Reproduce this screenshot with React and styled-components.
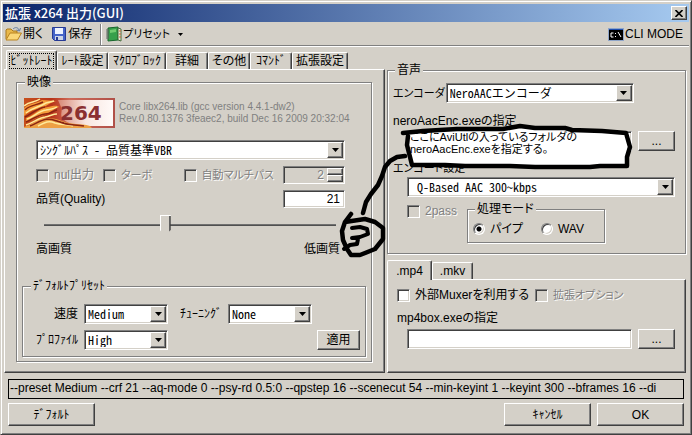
import React, { useState } from 'react'
import styled, { createGlobalStyle, css } from 'styled-components'

const face = '#d4d0c8'
const dark = '#404040'
const shade = '#808080'

const GlobalStyle = createGlobalStyle`
  * {
    box-sizing: border-box;
  }
  body {
    margin: 0;
    background: ${face};
  }
  body, button, input, select {
    font-family: "Liberation Sans", "Noto Sans CJK JP", sans-serif;
    font-size: 12px;
    line-height: 14px;
    font-feature-settings: "palt";
    color: #000;
  }
`

const raised = css`
  border: 1px solid;
  border-color: #fff ${dark} ${dark} #fff;
  box-shadow: inset -1px -1px 0 ${shade};
`

const sunken = css`
  border: 1px solid;
  border-color: ${shade} #fff #fff ${shade};
  box-shadow: inset 1px 1px 0 ${dark}, inset -1px -1px 0 ${face};
`

const Window = styled.main`
  display: flex;
  flex-direction: column;
  min-height: 100vh;
  padding: 3px 2px;
  background: ${face};
  border: 1px solid;
  border-color: ${face} ${dark} ${dark} ${face};
  box-shadow: inset 1px 1px 0 #fff, inset -1px -1px 0 ${shade};
  overflow: hidden;
`

const TitleBar = styled.header`
  display: flex;
  align-items: center;
  justify-content: space-between;
  height: 18px;
  padding: 0 2px;
  background: linear-gradient(to right, #0a246a, #a6caf0);
`

const Title = styled.h1`
  margin: 0;
  font-family: "Noto Sans CJK JP", sans-serif;
  font-size: 13px;
  line-height: 18px;
  font-weight: 500;
  color: #fff;
`

const CloseButton = styled.button`
  display: flex;
  align-items: center;
  justify-content: center;
  width: 16px;
  height: 14px;
  padding: 0;
  background: ${face};
  ${raised}
`

const Toolbar = styled.div`
  display: flex;
  align-items: center;
  height: 25px;
  padding: 0 6px 0 2px;
  border-bottom: 1px solid #fff;
  box-shadow: inset 0 -1px 0 ${shade};
`

const ToolButton = styled.button`
  display: flex;
  align-items: center;
  gap: 1px;
  padding: 0;
  margin-right: ${p => p.$gap || 0}px;
  border: none;
  background: none;
  white-space: nowrap;
  ${p => p.$small && 'font-size: 11px;'}
`

const Divider = styled.span`
  width: 2px;
  height: 21px;
  margin-right: 3px;
  background: ${shade};
  border-right: 1px solid #fff;
`

const Spring = styled.span`
  flex: 1;
`

const Body = styled.div`
  display: grid;
  grid-template-columns: minmax(0, 381fr) minmax(0, 299fr);
  gap: 2px;
  padding: 4px 3px 0 1px;
`

const TabList = styled.div`
  display: flex;
  align-items: flex-end;
  height: ${p => p.$height}px;
  padding-left: ${p => p.$inset || 0}px;
`

const Tab = styled.button`
  position: relative;
  width: ${p => p.$width}px;
  height: ${p => (p.$active ? 20 : 17)}px;
  margin-bottom: ${p => (p.$active ? -1 : 0)}px;
  padding: 0;
  background: ${face};
  border: 1px solid;
  border-color: #fff ${dark} transparent #fff;
  border-bottom: none;
  border-radius: 2px 2px 0 0;
  box-shadow: inset -1px 0 0 ${shade};
  white-space: nowrap;
`

const TabFocus = styled.span`
  display: block;
  margin: 0 2px;
  border: 1px dotted #000;
`

const TabPage = styled.section`
  padding: ${p => p.$pad};
  border: 1px solid;
  border-color: #fff ${dark} ${dark} #fff;
  box-shadow: inset -1px -1px 0 ${shade};
`

const Column = styled.div`
  display: flex;
  flex-direction: column;
  min-width: 0;
`

const Group = styled.fieldset`
  min-width: 0;
  margin: ${p => p.$margin || 0};
  padding: ${p => p.$pad};
  border: 1px solid ${shade};
  box-shadow: inset 1px 1px 0 #fff, 1px 1px 0 #fff;
`

const Legend = styled.legend`
  height: 14px;
  margin-left: ${p => p.$left || 0}px;
  padding: 0 2px;
  background: ${face};
  white-space: nowrap;
`

const Stack = styled.div`
  display: flex;
  flex-direction: column;
  gap: 6px;
  padding: 0 21px 0 14px;
`

const Row = styled.div`
  display: flex;
  align-items: ${p => (p.$top ? 'flex-start' : 'center')};
  justify-content: ${p => (p.$spread ? 'space-between' : 'flex-start')};
  gap: ${p => p.$gap || 0}px;
  margin: ${p => p.$margin || 0};
  height: ${p => p.$height || 20}px;
`

const About = styled.div`
  display: flex;
  align-items: center;
  gap: 4px;
  height: 30px;
  font-size: 10px;
  line-height: 12px;
  color: ${shade};
  white-space: nowrap;
`

const Label = styled.label`
  white-space: nowrap;
  ${p => p.$small && 'font-size: 11px;'}
  ${p => p.$block && 'display: block;'}
  ${p => p.$margin && `margin: ${p.$margin};`}
`

const SelectBox = styled.span`
  display: grid;
  align-items: center;
  min-width: 0;
  height: 20px;
  ${p => (p.$width ? `width: ${p.$width}px;` : 'flex: 1;')}
  background: #fff;
  ${sunken}
`

const NativeSelect = styled.select`
  grid-area: 1 / 1;
  width: 100%;
  height: 16px;
  padding: 0 18px 0 ${p => p.$indent || 3}px;
  border: none;
  outline: none;
  appearance: none;
  background: transparent;
  font-family: "Noto Sans CJK JP", sans-serif;
  font-feature-settings: "hwid";
`

const Arrow = styled.span`
  grid-area: 1 / 1;
  justify-self: end;
  display: flex;
  align-items: center;
  justify-content: center;
  width: 16px;
  height: 16px;
  margin-right: 1px;
  background: ${face};
  pointer-events: none;
  ${raised}
`

const TextBox = styled.input`
  min-width: 0;
  height: ${p => p.$height || 20}px;
  ${p => (p.$width ? `width: ${p.$width}px;` : 'flex: 1;')}
  padding: 0 4px;
  border-radius: 0;
  outline: none;
  background: #fff;
  text-align: right;
  ${sunken}
`

const Check = styled.label`
  display: flex;
  align-items: center;
  gap: 5px;
  white-space: nowrap;
  ${p => p.$small && 'font-size: 11px;'}
  ${p => p.$disabled && `
    color: ${shade};
    text-shadow: 1px 1px 0 #fff;
  `}
`

const CheckMark = styled.input`
  flex: none;
  width: 13px;
  height: 13px;
  margin: 0;
  appearance: none;
  background: #fff;
  ${sunken}
  &:disabled {
    background: ${face};
  }
  &:checked {
    background: #fff linear-gradient(#000, #000) center / 5px 5px no-repeat;
  }
`

const Dot = styled(CheckMark)`
  width: 12px;
  height: 12px;
  border-radius: 50%;
  &:checked {
    background: radial-gradient(circle, #000 2px, #fff 3px);
  }
`

const Spinner = styled.span`
  display: flex;
  width: 62px;
  height: 18px;
  padding: 1px;
  ${sunken}
`

const SpinInput = styled.input`
  flex: 1;
  min-width: 0;
  padding: 0 3px;
  border: none;
  background: none;
  text-align: right;
  color: ${shade};
  text-shadow: 1px 1px 0 #fff;
`

const SpinButtons = styled.span`
  display: grid;
  width: 16px;
`

const SpinButton = styled.button`
  min-height: 0;
  padding: 0;
  background: ${face};
  ${raised}
`

const Slider = styled.input`
  display: block;
  height: 22px;
  margin: 0 9px 0 8px;
  appearance: none;
  background: linear-gradient(${shade}, ${dark}) center / 100% 2px no-repeat;
  &::-webkit-slider-thumb {
    appearance: none;
    width: 11px;
    height: 20px;
    background: linear-gradient(to right, #fff 1px, ${face} 1px, ${face} 9px, ${shade} 9px, ${dark} 10px);
    border-top: 1px solid #fff;
    clip-path: polygon(0 0, 100% 0, 100% 75%, 50% 100%, 0 75%);
  }
`

const PushButton = styled.button`
  flex: none;
  width: ${p => p.$width}px;
  height: ${p => p.$height || 20}px;
  padding: 0;
  background: ${face};
  white-space: nowrap;
  ${raised}
`

const PresetGrid = styled.div`
  display: grid;
  grid-template-columns: 55px 84px 48px 84px 1fr;
  gap: 6px;
  align-items: center;
  justify-items: end;
`

const ApplyCell = styled.div`
  grid-column: 4 / 6;
`

const PathRow = styled(Row)`
  position: relative;
`

/* sits over the path field and points back to the quality panel */
const Callout = styled.div`
  position: absolute;
  left: 0;
  top: 0;
  z-index: 2;
  pointer-events: none;
`

const Ink = styled.svg`
  position: absolute;
  left: -70px;
  top: -11px;
  overflow: visible;
`

const Note = styled.p`
  position: relative;
  margin: 0;
  padding: 0 0 0 3px;
  line-height: 12px;
  font-size: 11px;
  white-space: nowrap;
`

const CommandLine = styled.output`
  display: block;
  height: 20px;
  margin: 6px 5px 4px;
  padding: 0 1px;
  border: 1px solid #000;
  line-height: 16px;
  white-space: nowrap;
  overflow: hidden;
`

const Footer = styled.footer`
  display: flex;
  gap: 6px;
  padding: 0 5px;
`

const Triangle = () => (
  <svg width="7" height="4" viewBox="0 0 7 4"><path d="M0 0h7L3.5 4z" /></svg>
)

const FolderIcon = () => (
  <svg width="17" height="16" viewBox="0 0 17 16">
    <path d="M1 13V4l1-1h4l2 2h4v3" fill="#e9b84a" stroke="#a9781c" />
    <path d="M1 14l4-7h11.500l-4 7z" fill="#fbd778" stroke="#b98320" />
    <path d="M8 3c2-2 5-2 6 1m1.500-2L14.500 5 11.500 4" fill="none" stroke="#617ba5" />
  </svg>
)

const DiskIcon = () => (
  <svg width="16" height="16" viewBox="0 0 16 16">
    <path d="M1.500 1.500h13v13h-11l-2-2z" fill="#4664c8" stroke="#263a94" />
    <path d="M4 2h8v6H4z" fill="#eef3ff" />
    <path d="M4 10h8v4H4z" fill="#cdd5e6" />
    <path d="M5 11h2v3H5z" fill="#263a94" />
  </svg>
)

const BookIcon = () => (
  <svg width="17" height="17" viewBox="0 0 17 17">
    <path d="M3 2l10-1v13L3 15z" fill="#37a04b" stroke="#17662b" />
    <path d="M13 2l3 1v12l-3-1z" fill="#e8f2d9" stroke="#426b3b" />
    <path d="M5 4l6-1v3L5 7z" fill="#72cb70" />
    <path d="M1 4h3M1 6h3M1 8h3M1 10h3M1 12h3" stroke="#666" />
    <path d="M14 5h2M14 8h2M14 11h2" stroke="#d35d3a" />
  </svg>
)

const ConsoleIcon = () => (
  <svg width="16" height="13" viewBox="0 0 16 13">
    <path d="M0 0h16v13H0z" fill="#8fa5c8" />
    <path d="M1 2h14v10H1z" fill="#000" />
    <path d="M1 1h14v1H1z" fill="#1f4fb0" />
    <path d="M5.500 5H3v4h2.500M7.500 5v1M7.500 8v1M10 4l3 5" stroke="#fff" fill="none" />
  </svg>
)

const Logo = () => (
  <svg width="91" height="30" viewBox="0 0 91 30">
    <defs>
      <linearGradient id="fire" x1="0" x2="1">
        <stop offset="0" stopColor="#c8501c" />
        <stop offset=".3" stopColor="#b83418" />
        <stop offset=".5" stopColor="#cf6a58" />
        <stop offset="1" stopColor="#b05048" />
      </linearGradient>
      <linearGradient id="plate" x1="0" x2="1">
        <stop offset="0" stopColor="#d88876" />
        <stop offset=".5" stopColor="#f8e6e0" />
        <stop offset="1" stopColor="#fffaf8" />
      </linearGradient>
    </defs>
    <path d="M0 0h91v30H0z" fill="url(#fire)" />
    <path d="M34 2h55v26H60C48 28 42 24 38 20c-2-5 1-7-1-11z" fill="url(#plate)" />
    <path d="M0 10C7 4 12 6 18 2l14 1c-8 2-11 7-18 8C8 12 5 14 0 18zM2 20c8-2 12-10 22-11 6-1 8-2 11 0-6 2-9 6-15 8-7 2-10 5-18 7z" fill="#f39a38" />
    <path d="M0 29c8-2 12-8 20-9 8 0 10 0 18 3 10 4 18 2 28 5l2 2H0z" fill="#eda044" />
    <path d="M0 8C6 3 10 5 16 1M2 15C9 9 14 10 22 5l8-2M3 21c7-2 11-8 19-9 5-1 8-1 11-3M2 27c7-2 12-7 19-8 5-1 8-3 12-3M14 28c6-3 10-6 17-3 7 2 12 1 18 3" fill="none" stroke="#ffe99a" strokeWidth="1.500" />
    <path d="M1 12C7 6 12 8 19 4M1 19c7-3 12-9 20-10M2 24c7-3 12-7 19-8 6 0 8-3 12-4M6 28c7-3 11-6 17-7 8 0 10 3 17 4M36 24c8 4 16 2 24 4" fill="none" stroke="#8a2412" strokeWidth="1.500" />
    <text x="36" y="22" fontFamily="DejaVu Sans" fontWeight="bold" fontSize="20" fill="#8a3030">264</text>
  </svg>
)

const Select = ({ id, label, value, width, indent }) => (
  <SelectBox $width={width}>
    <NativeSelect id={id} aria-label={label} defaultValue={value} $indent={indent}>
      <option>{value}</option>
    </NativeSelect>
    <Arrow><Triangle /></Arrow>
  </SelectBox>
)

const CheckBox = ({ children, disabled, small }) => (
  <Check $disabled={disabled} $small={small}>
    <CheckMark type="checkbox" disabled={disabled} />
    {children}
  </Check>
)

const mainTabs = [
  { name: 'ﾋﾞｯﾄﾚｰﾄ', width: 51 },
  { name: 'ﾚｰﾄ設定', width: 51 },
  { name: 'ﾏｸﾛﾌﾞﾛｯｸ', width: 58 },
  { name: '詳細', width: 42 },
  { name: 'その他', width: 42 },
  { name: 'ｺﾏﾝﾄﾞ', width: 42 },
  { name: '拡張設定', width: 56 },
]

const muxTabs = [
  { name: '.mp4', width: 45 },
  { name: '.mkv', width: 41 },
]

const App = () => {
  const [tab, setTab] = useState(0)
  const [mux, setMux] = useState(0)
  const [quality, setQuality] = useState(21)

  return (
    <Window>
      <GlobalStyle />
      <TitleBar>
        <Title>拡張 x264 出力(GUI)</Title>
        <CloseButton aria-label="閉じる">
          <svg width="8" height="7" viewBox="0 0 8 7"><path d="M.5 0l7 7M7.500 0l-7 7" stroke="#000" strokeWidth="1.600" /></svg>
        </CloseButton>
      </TitleBar>
      <Toolbar>
        <ToolButton $gap={8}><FolderIcon />開く</ToolButton>
        <ToolButton $gap={8}><DiskIcon />保存</ToolButton>
        <Divider />
        <ToolButton $gap={8} $small><BookIcon />プリセット</ToolButton>
        <ToolButton aria-label="プリセット一覧"><svg width="5" height="3" viewBox="0 0 5 3"><path d="M0 0h5L2.500 3z" /></svg></ToolButton>
        <Spring />
        <ToolButton><ConsoleIcon />CLI MODE</ToolButton>
      </Toolbar>

      <Body>
        <Column>
          <TabList role="tablist" $height={18} $inset={2}>
            {mainTabs.map((t, i) => (
              <Tab key={t.name} role="tab" $width={t.width} $active={tab === i} onClick={() => setTab(i)}>
                {tab === i ? <TabFocus>{t.name}</TabFocus> : t.name}
              </Tab>
            ))}
          </TabList>
          <TabPage $pad="5px 12px 10px 11px">
            <Group $pad="9px 5px 4px 5px">
              <Legend $left={3}>映像</Legend>
              <Row $height={30} $margin="0 0 12px 2px">
                <About>
                  <Logo />
                  <div>Core libx264.lib (gcc version 4.4.1-dw2)<br />Rev.0.80.1376 3feaec2, build Dec 16 2009 20:32:04</div>
                </About>
              </Row>
              <Stack>
                <Row>
                  <Select label="エンコードモード" value="ｼﾝｸﾞﾙﾊﾟｽ - 品質基準VBR" />
                </Row>
                <Row $height={18} $gap={9}>
                  <CheckBox disabled>nul出力</CheckBox>
                  <CheckBox disabled small>ターボ</CheckBox>
                  <Spring />
                  <CheckBox disabled small>自動マルチパス</CheckBox>
                  <Spinner>
                    <SpinInput aria-label="パス数" defaultValue="2" disabled />
                    <SpinButtons>
                      <SpinButton aria-label="増やす" disabled />
                      <SpinButton aria-label="減らす" disabled />
                    </SpinButtons>
                  </Spinner>
                </Row>
                <Row $height={18} $spread>
                  <Label htmlFor="quality">品質(Quality)</Label>
                  <TextBox id="quality" $width={62} $height={18} value={quality} onChange={e => setQuality(e.target.value)} />
                </Row>
                <Slider type="range" aria-label="品質" min="0" max="51" value={quality} onChange={e => setQuality(e.target.value)} />
                <Row $height={14} $spread $margin="0 5px 0 0">
                  <span>高画質</span>
                  <span>低画質</span>
                </Row>
              </Stack>
              <Group $margin="23px 0 0" $pad="11px 5px 6px 0">
                <Legend $left={8}>ﾃﾞﾌｫﾙﾄﾌﾟﾘｾｯﾄ</Legend>
                <PresetGrid>
                  <Label htmlFor="speed">速度</Label>
                  <Select id="speed" value="Medium" width={84} />
                  <Label htmlFor="tuning">ﾁｭｰﾆﾝｸﾞ</Label>
                  <Select id="tuning" value="None" width={84} />
                  <span />
                  <Label htmlFor="profile">ﾌﾟﾛﾌｧｲﾙ</Label>
                  <Select id="profile" value="High" width={84} />
                  <span />
                  <ApplyCell>
                    <PushButton $width={43}>適用</PushButton>
                  </ApplyCell>
                </PresetGrid>
              </Group>
            </Group>
          </TabPage>
        </Column>

        <Column>
          <Group $margin="12px 0 6px" $pad="6px 10px 9px 5px">
            <Legend $left={2}>音声</Legend>
            <Row $gap={1}>
              <Label htmlFor="encoder" $small>エンコーダ</Label>
              <Select id="encoder" value="NeroAACエンコーダ" width={188} />
            </Row>
            <Label htmlFor="encPath" $block $margin="11px 0 3px">neroAacEnc.exeの指定</Label>
            <PathRow $gap={6} $margin="0 0 0 14px">
              <TextBox id="encPath" />
              <PushButton $width={37}>...</PushButton>
              <Callout>
                <Ink width="300" height="140" viewBox="337 120 300 140" fill="none" stroke="#000" strokeWidth="4.500" strokeLinecap="round" strokeLinejoin="round">
                  <path d="M409 133L423 131L457 129L503 130L520 127L567 129L626 133L630 147L627 157L627 166L412 165Z" fill="#fff" stroke="none" />
                  <path d="M403 133L423 131L457 129L503 129L520 126L535 128L565 128L572 130L602 131L626 133L628 140L630 147L627 157L627 166L600 166L590 167L535 167L510 166L465 166L445 165L412 165L410 157L407 145L408 136" />
                  <path d="M405 156L397 157L390 161L385 167L382 176L378 185L371 194L366 202L363 213M351 214L345 222L342 231L343 240L347 249L351 255L360 255L375 249L383 239L383 228L375 222L365 219L345 222" />
                  <path d="M352 228L360 227L367 229L368 234L360 237L352 238M358 239L357 244L350 245L344 249" strokeWidth="4" />
                </Ink>
                <Note>ここにAviUtlの入っているフォルダの<br />neroAacEnc.exeを指定する。</Note>
              </Callout>
            </PathRow>
            <Label htmlFor="encMode" $block $small $margin="10px 0 2px">エンコード設定</Label>
            <Row $margin="0 0 5px 14px">
              <Select id="encMode" value="Q-Based AAC 300~kbps" indent={9} />
            </Row>
            <Row $top $height={42} $gap={10} $margin="0 0 0 14px">
              <Row $height={18}><CheckBox disabled>2pass</CheckBox></Row>
              <Group $pad="6px 20px 6px 5px">
                <Legend $left={2}>処理モード</Legend>
                <Row $height={14} $gap={18}>
                  <Check><Dot type="radio" name="mode" defaultChecked />パイプ</Check>
                  <Check><Dot type="radio" name="mode" />WAV</Check>
                </Row>
              </Group>
            </Row>
          </Group>

          <TabList role="tablist" $height={19}>
            {muxTabs.map((t, i) => (
              <Tab key={t.name} role="tab" $width={t.width} $active={mux === i} onClick={() => setMux(i)}>{t.name}</Tab>
            ))}
          </TabList>
          <TabPage $pad="8px 10px 23px 9px">
            <Row $height={14} $gap={6}>
              <CheckBox>外部Muxerを利用する</CheckBox>
              <CheckBox disabled small>拡張オプション</CheckBox>
            </Row>
            <Label htmlFor="muxPath" $block $margin="9px 0 4px">mp4box.exeの指定</Label>
            <Row $gap={6} $margin="0 0 0 10px">
              <TextBox id="muxPath" />
              <PushButton $width={37}>...</PushButton>
            </Row>
          </TabPage>
        </Column>
      </Body>

      <CommandLine>--preset Medium --crf 21 --aq-mode 0 --psy-rd 0.5:0 --qpstep 16 --scenecut 54 --min-keyint 1 --keyint 300 --bframes 16 --di</CommandLine>
      <Footer>
        <PushButton $width={87} $height={23}>ﾃﾞﾌｫﾙﾄ</PushButton>
        <Spring />
        <PushButton $width={87} $height={23}>ｷｬﾝｾﾙ</PushButton>
        <PushButton $width={87} $height={23}>OK</PushButton>
      </Footer>
    </Window>
  )
}

export default App
